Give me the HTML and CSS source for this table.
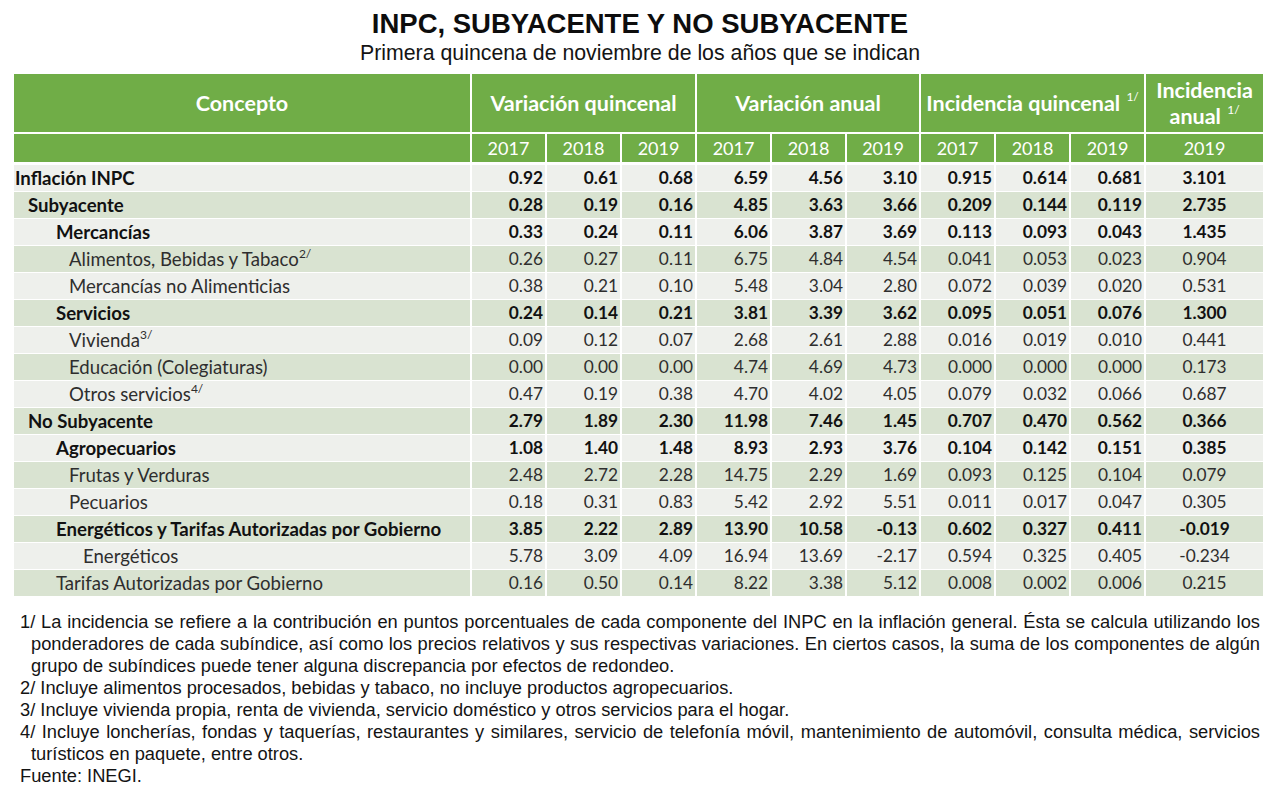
FILE: index.html
```html
<!DOCTYPE html>
<html lang="es">
<head>
<meta charset="utf-8">
<title>INPC, subyacente y no subyacente</title>
<link rel="stylesheet" href="styles.css">
</head>
<body>
<header class="heading">
  <h1 class="title">INPC, SUBYACENTE Y NO SUBYACENTE</h1>
  <p class="subtitle">Primera quincena de noviembre de los años que se indican</p>
</header>
<table class="data">
  <colgroup>
    <col class="c-concept">
    <col class="c-num"><col class="c-num"><col class="c-num">
    <col class="c-num"><col class="c-num"><col class="c-num-n">
    <col class="c-num"><col class="c-num"><col class="c-num">
    <col class="c-last">
  </colgroup>
  <thead>
    <tr class="h1">
      <th>Concepto</th>
      <th colspan="3">Variación quincenal</th>
      <th colspan="3">Variación anual</th>
      <th colspan="3">Incidencia quincenal <sup class="hs">1/</sup></th>
      <th class="last">Incidencia<br>anual <sup class="hs">1/</sup></th>
    </tr>
    <tr class="h2">
      <th></th>
      <th>2017</th><th>2018</th><th>2019</th>
      <th>2017</th><th>2018</th><th>2019</th>
      <th>2017</th><th>2018</th><th>2019</th>
      <th class="last">2019</th>
    </tr>
  </thead>
  <tbody>
    <tr class="odd b"><td class="lab l0">Inflación INPC</td><td>0.92</td><td>0.61</td><td>0.68</td><td>6.59</td><td>4.56</td><td>3.10</td><td>0.915</td><td>0.614</td><td>0.681</td><td class="last">3.101</td></tr>
    <tr class="even b"><td class="lab l1">Subyacente</td><td>0.28</td><td>0.19</td><td>0.16</td><td>4.85</td><td>3.63</td><td>3.66</td><td>0.209</td><td>0.144</td><td>0.119</td><td class="last">2.735</td></tr>
    <tr class="odd b"><td class="lab l2">Mercancías</td><td>0.33</td><td>0.24</td><td>0.11</td><td>6.06</td><td>3.87</td><td>3.69</td><td>0.113</td><td>0.093</td><td>0.043</td><td class="last">1.435</td></tr>
    <tr class="even"><td class="lab l3">Alimentos, Bebidas y Tabaco<sup class="ls">2/</sup></td><td>0.26</td><td>0.27</td><td>0.11</td><td>6.75</td><td>4.84</td><td>4.54</td><td>0.041</td><td>0.053</td><td>0.023</td><td class="last">0.904</td></tr>
    <tr class="odd"><td class="lab l3">Mercancías no Alimenticias</td><td>0.38</td><td>0.21</td><td>0.10</td><td>5.48</td><td>3.04</td><td>2.80</td><td>0.072</td><td>0.039</td><td>0.020</td><td class="last">0.531</td></tr>
    <tr class="even b"><td class="lab l2">Servicios</td><td>0.24</td><td>0.14</td><td>0.21</td><td>3.81</td><td>3.39</td><td>3.62</td><td>0.095</td><td>0.051</td><td>0.076</td><td class="last">1.300</td></tr>
    <tr class="odd"><td class="lab l3">Vivienda<sup class="ls">3/</sup></td><td>0.09</td><td>0.12</td><td>0.07</td><td>2.68</td><td>2.61</td><td>2.88</td><td>0.016</td><td>0.019</td><td>0.010</td><td class="last">0.441</td></tr>
    <tr class="even"><td class="lab l3">Educación (Colegiaturas)</td><td>0.00</td><td>0.00</td><td>0.00</td><td>4.74</td><td>4.69</td><td>4.73</td><td>0.000</td><td>0.000</td><td>0.000</td><td class="last">0.173</td></tr>
    <tr class="odd"><td class="lab l3">Otros servicios<sup class="ls">4/</sup></td><td>0.47</td><td>0.19</td><td>0.38</td><td>4.70</td><td>4.02</td><td>4.05</td><td>0.079</td><td>0.032</td><td>0.066</td><td class="last">0.687</td></tr>
    <tr class="even b"><td class="lab l1">No Subyacente</td><td>2.79</td><td>1.89</td><td>2.30</td><td>11.98</td><td>7.46</td><td>1.45</td><td>0.707</td><td>0.470</td><td>0.562</td><td class="last">0.366</td></tr>
    <tr class="odd b"><td class="lab l2">Agropecuarios</td><td>1.08</td><td>1.40</td><td>1.48</td><td>8.93</td><td>2.93</td><td>3.76</td><td>0.104</td><td>0.142</td><td>0.151</td><td class="last">0.385</td></tr>
    <tr class="even"><td class="lab l3">Frutas y Verduras</td><td>2.48</td><td>2.72</td><td>2.28</td><td>14.75</td><td>2.29</td><td>1.69</td><td>0.093</td><td>0.125</td><td>0.104</td><td class="last">0.079</td></tr>
    <tr class="odd"><td class="lab l3">Pecuarios</td><td>0.18</td><td>0.31</td><td>0.83</td><td>5.42</td><td>2.92</td><td>5.51</td><td>0.011</td><td>0.017</td><td>0.047</td><td class="last">0.305</td></tr>
    <tr class="even b"><td class="lab l2">Energéticos y Tarifas Autorizadas por Gobierno</td><td>3.85</td><td>2.22</td><td>2.89</td><td>13.90</td><td>10.58</td><td>-0.13</td><td>0.602</td><td>0.327</td><td>0.411</td><td class="last">-0.019</td></tr>
    <tr class="odd"><td class="lab l4">Energéticos</td><td>5.78</td><td>3.09</td><td>4.09</td><td>16.94</td><td>13.69</td><td>-2.17</td><td>0.594</td><td>0.325</td><td>0.405</td><td class="last">-0.234</td></tr>
    <tr class="even"><td class="lab l2">Tarifas Autorizadas por Gobierno</td><td>0.16</td><td>0.50</td><td>0.14</td><td>8.22</td><td>3.38</td><td>5.12</td><td>0.008</td><td>0.002</td><td>0.006</td><td class="last">0.215</td></tr>
  </tbody>
</table>
<section class="notes">
  <div class="note">
    <div class="line just">1/ La incidencia se refiere a la contribución en puntos porcentuales de cada componente del INPC en la inflación general. Ésta se calcula utilizando los</div>
    <div class="line cont just">ponderadores de cada subíndice, así como los precios relativos y sus respectivas variaciones. En ciertos casos, la suma de los componentes de algún</div>
    <div class="line cont">grupo de subíndices puede tener alguna discrepancia por efectos de redondeo.</div>
  </div>
  <div class="note"><div class="line">2/ Incluye alimentos procesados, bebidas y tabaco, no incluye productos agropecuarios.</div></div>
  <div class="note"><div class="line">3/ Incluye vivienda propia, renta de vivienda, servicio doméstico y otros servicios para el hogar.</div></div>
  <div class="note">
    <div class="line just">4/ Incluye loncherías, fondas y taquerías, restaurantes y similares, servicio de telefonía móvil, mantenimiento de automóvil, consulta médica, servicios</div>
    <div class="line cont">turísticos en paquete, entre otros.</div>
  </div>
  <div class="note"><div class="line">Fuente: INEGI.</div></div>
</section>
</body>
</html>
```

FILE: styles.css
```css
html, body {
  margin: 0;
  padding: 0;
  background: #ffffff;
}

body {
  width: 1280px;
  font-family: "Liberation Sans", Arial, sans-serif;
  color: #111;
}

.heading {
  text-align: center;
  padding-top: 9px;
}

.title {
  margin: 0;
  font-family: "Liberation Sans", Arial, sans-serif;
  font-weight: 700;
  font-size: 27.5px;
  line-height: 30px;
  color: #0d0d0d;
}

.subtitle {
  margin: 2px 0 0;
  font-size: 21.3px;
  line-height: 24px;
  color: #141414;
}

.data {
  margin: 9px 0 0 14px;
  width: 1249px;
  table-layout: fixed;
  border-collapse: separate;
  border-spacing: 0;
  font-family: Lato, "Open Sans", sans-serif;
}

.c-concept { width: 458px; }
.c-num { width: 75px; }
.c-num-n { width: 74px; }
.c-last { width: 117px; }

.data th,
.data td {
  padding: 0;
  border-right: 2px solid #ffffff;
  white-space: nowrap;
  overflow: visible;
}

.data th.last,
.data td.last {
  border-right: 0;
}

.data thead th {
  background: #70ad47;
  color: #ffffff;
  text-align: center;
  vertical-align: middle;
}

.h1 th {
  height: 58px;
  border-bottom: 2px solid #ffffff;
  font-weight: 700;
  font-size: 21.5px;
  line-height: 26px;
}

.h2 th {
  height: 28px;
  border-bottom: 3px solid #ffffff;
  font-weight: 400;
  font-size: 18px;
  line-height: 28px;
  color: #f3f6ee;
}

.hs {
  font-size: 12px;
  font-weight: 400;
  vertical-align: 10px;
  line-height: 0;
  margin-left: 1px;
}

.data td {
  height: 26px;
  border-bottom: 1px solid #ffffff;
  font-size: 17.3px;
  line-height: 26px;
  text-align: right;
  padding-right: 2px;
  color: #2e2e2e;
}

.data td.last {
  text-align: center;
  padding-right: 0;
}

.odd td { background: #eef0ec; }
.even td { background: #d9e3d1; }

.b td {
  font-weight: 700;
  color: #111111;
}

.data td.lab {
  text-align: left;
  padding-right: 0;
  font-size: 18.6px;
}

.data td.l0 { padding-left: 1px; }
.data td.l1 { padding-left: 14px; }
.data td.l2 { padding-left: 42px; }
.data td.l3 { padding-left: 55px; }
.data td.l4 { padding-left: 69px; }

.ls {
  font-size: 12px;
  line-height: 0;
  vertical-align: 8px;
}

.notes {
  margin: 14px 0 0 20px;
  width: 1240px;
  font-family: "Liberation Sans", Arial, sans-serif;
  font-size: 18.3px;
  line-height: 22px;
  color: #141414;
}

.line {
  white-space: nowrap;
}

.line.just {
  white-space: normal;
  text-align: justify;
  text-align-last: justify;
}

.line.cont {
  padding-left: 11px;
}
```
